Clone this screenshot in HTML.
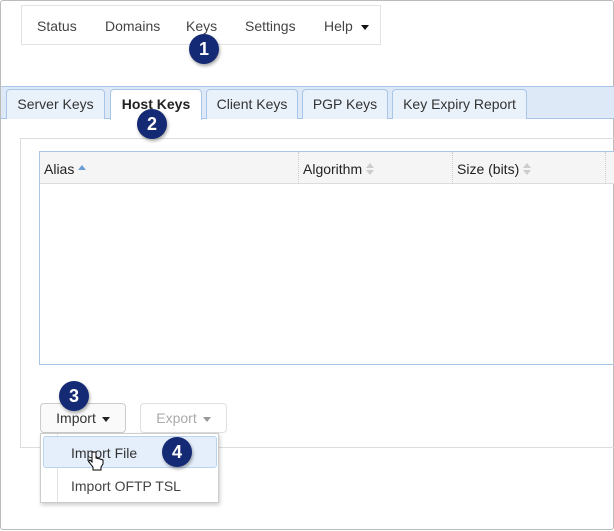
<!DOCTYPE html>
<html><head><style>
*{box-sizing:border-box;margin:0;padding:0}
body{width:614px;height:531px;background:#fff;font-family:"Liberation Sans",sans-serif;font-size:14px;color:#333;position:relative;overflow:hidden}
.frame{position:absolute;left:0;top:0;width:614px;height:530px;border:1px solid #bbb;border-radius:3px}
.abs{position:absolute}
.nav{left:21px;top:5px;width:360px;height:40px;border:1px solid #e3e3e3;background:#fff}
.nav span{position:absolute;top:12px;font-size:14px;color:#444}
.band{left:1px;top:86px;width:613px;height:33px;background:#dde9f7;border-top:1px solid #a9c5e8;border-bottom:1px solid #a9c5e8}
.tab{position:absolute;top:89px;height:30px;border:1px solid #a9c5e8;border-bottom:none;border-radius:4px 4px 0 0;background:#e9f1fb;font-size:14px;color:#333;text-align:center;line-height:29px}
.tab.act{background:#fff;font-weight:bold;height:31px;color:#222}
.panel{left:20px;top:138px;width:600px;height:310px;border:1px solid #ddd}
.table{left:39px;top:151px;width:580px;height:214px;border:1px solid #a9c5e8}
.th{left:40px;top:152px;width:580px;height:32px;background:#f5f5f5;border-bottom:1px solid #ddd}
.th span{position:absolute;top:9px;font-size:14px;color:#222}
.sep{position:absolute;top:0;width:1px;height:32px;border-left:1px dotted #ccc}
.up{position:absolute;width:0;height:0;border-left:4px solid transparent;border-right:4px solid transparent;border-bottom:5px solid #ccc}
.dn{position:absolute;width:0;height:0;border-left:4px solid transparent;border-right:4px solid transparent;border-top:5px solid #ccc}
.badge{position:absolute;width:30px;height:30px;border-radius:50%;background:#152a74;color:#fff;font-weight:bold;font-size:18px;text-align:center;line-height:30px;box-shadow:1px 2px 3px rgba(0,0,0,.35)}
.btn{position:absolute;top:403px;height:30px;border:1px solid #ccc;border-radius:4px;background:#fafafa;font-size:14px;line-height:28px;text-align:center}
.caret{display:inline-block;width:0;height:0;border-left:4px solid transparent;border-right:4px solid transparent;border-top:5px solid #222;vertical-align:middle;margin-left:6px}
.menu{left:40px;top:433px;width:179px;height:70px;border:1px solid #ccc;background:#fff;box-shadow:1px 2px 4px rgba(0,0,0,.2)}
</style></head><body>
<div class="frame"></div>
<div class="abs nav">
<span style="left:15px">Status</span><span style="left:83px">Domains</span><span style="left:164px">Keys</span><span style="left:223px">Settings</span><span style="left:302px">Help</span><span class="abs" style="left:339px;top:19px;border-left:4px solid transparent;border-right:4px solid transparent;border-top:5px solid #111"></span>
</div>
<div class="abs band"></div>
<div class="tab" style="left:6px;width:99px">Server Keys</div>
<div class="tab act" style="left:110px;width:92px">Host Keys</div>
<div class="tab" style="left:206px;width:92px">Client Keys</div>
<div class="tab" style="left:302px;width:86px">PGP Keys</div>
<div class="tab" style="left:392px;width:135px">Key Expiry Report</div>
<div class="abs panel"></div>
<div class="abs table"></div>
<div class="abs th">
<span style="left:4px">Alias</span>
<div class="up" style="left:38px;top:13px;border-bottom-color:#6a9fd4"></div>
<div class="sep" style="left:258px"></div>
<span style="left:263px">Algorithm</span>
<div class="up" style="left:326px;top:11px"></div><div class="dn" style="left:326px;top:18px"></div>
<div class="sep" style="left:412px"></div>
<span style="left:417px">Size (bits)</span>
<div class="up" style="left:483px;top:11px"></div><div class="dn" style="left:483px;top:18px"></div>
<div class="sep" style="left:565px"></div>
</div>
<div class="btn" style="left:40px;width:86px;color:#333">Import<span class="caret"></span></div>
<div class="btn" style="left:140px;width:87px;color:#aaa;background:#fff;border-color:#e0e0e0">Export<span class="caret" style="border-top-color:#999"></span></div>
<div class="abs menu">
<div class="abs" style="left:16px;top:0;width:1px;height:68px;background:#e3e3e3"></div>
<div class="abs" style="left:2px;top:2px;width:174px;height:32px;background:#e5effb;border:1px solid #bcd3ef;border-radius:3px"></div>
<span class="abs" style="left:30px;top:11px;color:#333">Import File</span>
<span class="abs" style="left:30px;top:44px;color:#444">Import OFTP TSL</span>
</div>
<svg class="abs" style="left:88px;top:451px" width="16" height="20" viewBox="0 0 16 20"><path d="M4 1v10l-2-2-1.5 1.5L5 16v3h8v-3l2-3V9l-3-1-2-.5-2-.5V1z" fill="#fff" stroke="#000" stroke-width="1"/></svg>
<div class="badge" style="left:189px;top:34px">1</div>
<div class="badge" style="left:137px;top:109px">2</div>
<div class="badge" style="left:59px;top:381px">3</div>
<div class="badge" style="left:162px;top:437px">4</div>
</body></html>
